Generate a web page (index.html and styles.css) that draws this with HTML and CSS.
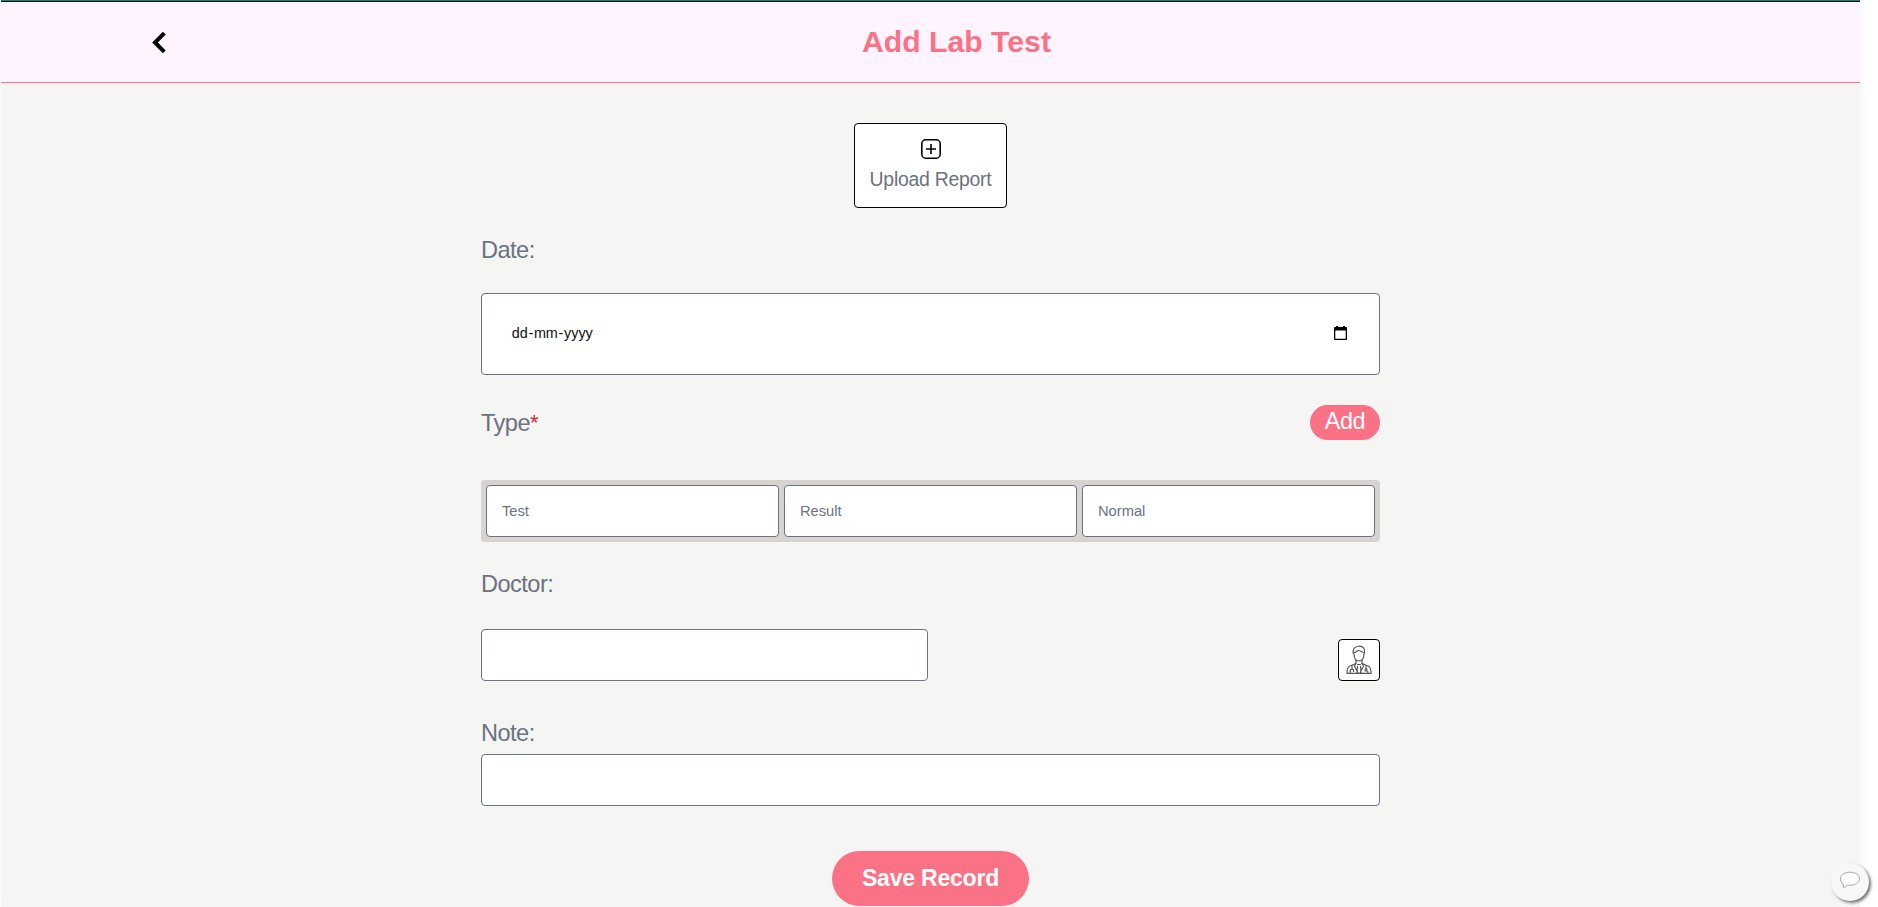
FILE: index.html
```html
<!DOCTYPE html>
<html lang="en">
<head>
<meta charset="utf-8">
<title>Add Lab Test</title>
<link rel="stylesheet" href="styles.css">
</head>
<body>
<div class="page">
  <header class="header">
    <svg class="back" width="15" height="23" viewBox="0 0 15 23"><path d="M12.3 2.200L3 11.500L12.300 20.800" fill="none" stroke="#000" stroke-width="4"/></svg>
    <h1 class="title">Add Lab Test</h1>
  </header>
  <main class="form">
    <button class="upload" type="button">
      <svg width="20" height="20" viewBox="0 0 20 20" fill="none" stroke="#000" stroke-width="1.6"><rect x=".8" y=".8" width="18.4" height="18.4" rx="4"/><path d="M10 5v10M5 10h10"/></svg>
      <span>Upload Report</span>
    </button>
    <div class="label label-date">Date:</div>
    <div class="box date">
      <div class="date-text"><span>dd</span>-<span>mm</span>-<span>yyyy</span></div>
      <svg class="calendar" width="13" height="14" viewBox="0 0 13 14"><path d="M2 0h2v1h5V0h2v1h1.3q.7 0 .7.7V13.3q0 .7-.7.7H.7Q0 14 0 13.3V1.7Q0 1 .7 1H2zM1.3 4.4v8.3h10.4V4.4z" fill="#000" fill-rule="evenodd"/></svg>
    </div>
    <div class="type-row">
      <div class="label">Type<span class="star">*</span></div>
      <button class="add" type="button">Add</button>
    </div>
    <div class="group">
      <input class="box" placeholder="Test">
      <input class="box" placeholder="Result">
      <input class="box" placeholder="Normal">
    </div>
    <div class="label label-doctor">Doctor:</div>
    <div class="doctor-row">
      <input class="box doctor">
      <button class="pick" type="button" aria-label="Choose doctor">
        <svg width="26" height="30" viewBox="0 0 26 30" fill="none" stroke="#555" stroke-width="1.15">
          <path d="M7.4 9C6.2 4.5 8.5 1.3 12.8 1.2C17.5 1 19.5 4 18.3 9"/>
          <path d="M8 8.5C8 13 10 16 13 16S18 13 18 8.500M8 7.500C10.500 7.500 11 5.500 12.500 5.500S16 7 18 7.500"/>
          <path d="M10 15v3.500L3.500 21.200Q1 22.500 1 28.400H25Q25 22.500 22.500 21.200L16 18.500V15"/>
          <path d="M10 18L8.500 21L12 28M16 18L17.500 21L14 28M11 19.500h4M11.500 21L11 28M14.500 21L15 28M6 20.500v4M4.500 27v-2.500h3V27M20 20.500v3.500M4.200 28v-2M21.800 28v-2"/>
          <circle cx="20" cy="25" r="1.100"/>
        </svg>
      </button>
    </div>
    <div class="label label-note">Note:</div>
    <input class="box note">
    <button class="save" type="button">Save Record</button>
  </main>
</div>
<button class="chat" type="button" aria-label="Chat"><svg width="22" height="18" viewBox="0 0 22 18"><path d="M4 12.800C-1.500 8 2 1.200 11 1.200C17 1.200 20.500 4.500 20.500 8C20.500 12 16 14.500 8.500 14.300L4.800 16.600Z" fill="#fff" stroke="#aaa" stroke-width="1"/></svg></button>
</body>
</html>
```
FILE: styles.css
```css
* { box-sizing: border-box; }
body {
  margin: 0;
  height: 907px;
  overflow: hidden;
  background: #fff;
  font-family: "Liberation Sans", Arial, sans-serif;
  color: #6b7280;
}
button, input { font-family: inherit; margin: 0; }
.page {
  width: 1859px;
  height: 907px;
  margin-left: 1px;
  background: #f5f5f4;
  box-shadow: 0 -4px 12px rgba(0, 0, 0, .04);
}
.header {
  display: flex;
  height: 83px;
  border-top: 1px solid #0d8478;
  border-bottom: 1px solid #fb7185;
  background: #fdf4ff;
  box-shadow: inset 0 1px #000;
}
.back { margin: 30px 0 0 151px; }
.title {
  margin: 23px 0 0 695px;
  font-size: 30.2px;
  line-height: 36px;
  color: #fb7185;
  white-space: nowrap;
}
.form {
  display: flex;
  flex-direction: column;
  width: 899px;
  margin-left: 480px;
  padding-top: 40px;
}
.upload {
  display: flex;
  flex-direction: column;
  align-items: center;
  align-self: center;
  width: 153px;
  height: 85px;
  padding: 15px 0 0;
  border: 1px solid #000;
  border-radius: 4px;
  background: #fff;
  font-size: 19.4px;
  line-height: 28px;
  letter-spacing: -.25px;
  color: #6b7280;
}
.upload span { margin-top: 6px; white-space: nowrap; }
.label { font-size: 23.6px; line-height: 32px; letter-spacing: -.55px; }
.label-date { margin: 26px 0 27px; }
.box {
  display: block;
  min-width: 0;
  height: 52px;
  padding: 0 15px;
  border: 1px solid #6b7280;
  border-radius: 4px;
  background: #fff;
  font-size: 14.7px;
}
.box::placeholder { color: #6b7280; opacity: 1; }
.date {
  display: flex;
  align-items: center;
  justify-content: space-between;
  height: 82px;
  padding: 0 32px 0 29px;
  font-size: 14.4px;
  color: #111;
}
.date-text { margin-bottom: 2px; }
.date-text span { padding: 0 .7px; }
.calendar { margin-bottom: 2px; }
.type-row {
  display: flex;
  align-items: flex-start;
  justify-content: space-between;
  margin-top: 30px;
  height: 75px;
}
.type-row .label { margin-top: 2px; }
.star { color: #dc2626; font-size: 22px; line-height: 1; vertical-align: 1px; }
.add {
  width: 70px;
  height: 35px;
  padding: 0 0 2px;
  border: 0;
  border-radius: 18px;
  background: #fb7185;
  color: #fff;
  font-size: 23.4px;
  line-height: 33px;
  letter-spacing: -.4px;
}
.group {
  display: grid;
  grid-template-columns: repeat(3, 1fr);
  gap: 5px;
  padding: 5px;
  border-radius: 4px;
  background: #d6d3d1;
}
.label-doctor { margin: 26px 0 29px; }
.doctor-row { display: flex; align-items: flex-end; justify-content: space-between; }
.doctor { width: 447px; }
.pick {
  display: flex;
  align-items: center;
  justify-content: center;
  width: 42px;
  height: 42px;
  padding: 0;
  border: 1px solid #000;
  border-radius: 4px;
  background: #fff;
}
.label-note { margin: 36px 0 5px; }
.save {
  align-self: center;
  width: 197px;
  height: 55px;
  margin-top: 45px;
  padding: 0 0 1px;
  border: 0;
  border-radius: 28px;
  background: #fb7185;
  color: #fff;
  font-size: 23px;
  font-weight: 700;
  letter-spacing: -.2px;
}
.chat {
  position: absolute;
  left: 1831px;
  top: 863px;
  display: flex;
  align-items: center;
  justify-content: center;
  width: 38px;
  height: 38px;
  padding: 0 0 4px;
  border: 0;
  border-radius: 50%;
  background: #f8f8f8;
  box-shadow: 2px 2px 3px #777;
}
```
